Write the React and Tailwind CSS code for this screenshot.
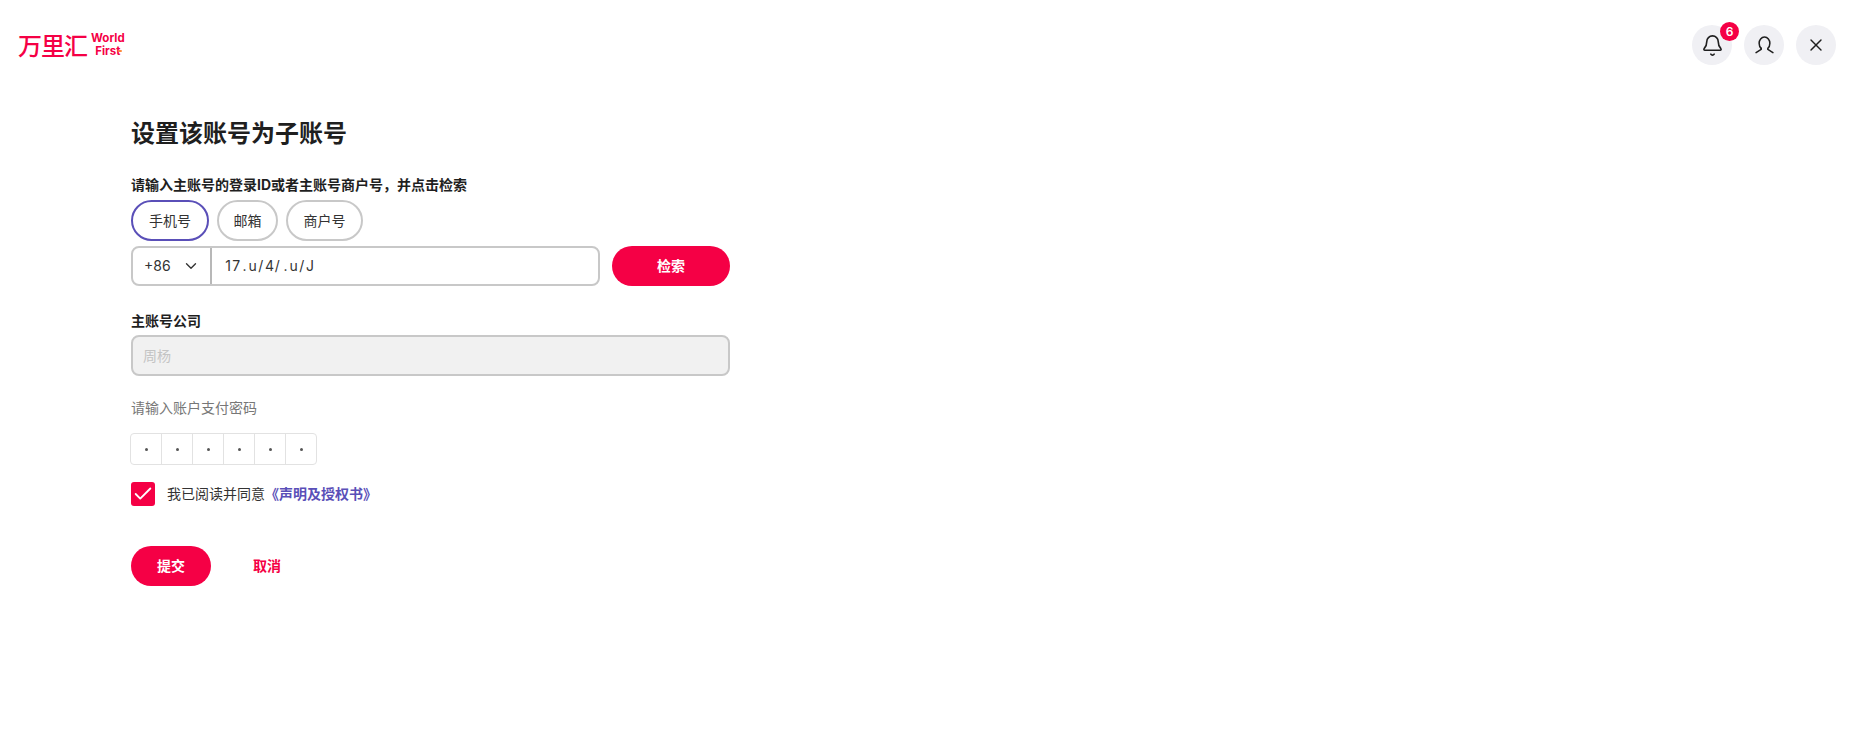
import { Bell, ChevronDown, Check, X } from 'lucide-react';

const CJK = "font-['Inter','Noto_Sans_CJK_SC',sans-serif]";

// the number is partly wiped out in the picture, only these bits are left
const PHONE_BITS = ['1', '7', '.', 'u', '/', '4', '/', '.', 'u', '/', 'J'];

function Logo() {
  return (
    <div className="flex items-center text-[#f50045]">
      <span className="text-[24px] leading-none font-medium tracking-[-1px] font-['Noto_Sans_CJK_SC',sans-serif]">万里汇</span>
      <div className="relative ml-[4px] flex flex-col items-center text-[11.5px] leading-[13px] font-bold font-['Inter',sans-serif]">
        <span>World</span>
        <span>First</span>
        <span className="absolute right-[3px] bottom-[6px] h-[2px] w-[4px] rounded-full bg-[#ff8a3c]" />
      </div>
    </div>
  );
}

function RoundButton({ children, badge }) {
  return (
    <div className="relative flex h-10 w-10 items-center justify-center rounded-full bg-[#f0f0f4] text-[#1f1f1f]">
      {children}
      {badge && (
        <span className="absolute -top-[3px] -right-[7px] flex h-[19px] w-[19px] items-center justify-center rounded-full bg-[#f50045] text-xs leading-none font-semibold text-white">
          {badge}
        </span>
      )}
    </div>
  );
}

function UserIcon() {
  return (
    <svg width="23" height="23" viewBox="0 0 18 18" fill="none" stroke="currentColor" strokeWidth="1.2" strokeLinecap="round">
      <path d="M6.4 11.2C5.2 10.2 4.8 8.8 4.8 7.2 4.8 4.6 6.5 2.4 9 2.4s4.2 2.2 4.2 4.8c0 1.6-.4 3-1.6 4v.8l4 2.6" />
      <path d="M6.4 11.2v.8l-4 2.6" />
    </svg>
  );
}

function Tab({ label, active, width }) {
  return (
    <div
      className={`flex h-[41px] items-center justify-center rounded-full bg-white text-sm text-[#333] ${width} ${
        active ? 'border-2 border-[#5a4fb8]' : 'border-2 border-[#c8c8c8]'
      }`}
    >
      {label}
    </div>
  );
}

export default function App() {
  return (
    <div className={`min-h-[729px] bg-white ${CJK}`}>
      <header className="flex h-[90px] items-center justify-between pr-[33px] pl-[18px]">
        <Logo />
        <div className="flex gap-3">
          <RoundButton badge="6"><Bell size={23} strokeWidth={1.7} /></RoundButton>
          <RoundButton><UserIcon /></RoundButton>
          <RoundButton><X size={20} strokeWidth={1.7} /></RoundButton>
        </div>
      </header>

      <main className="ml-[131px] w-[599px] pt-[27px]">
        <h1 className="text-2xl leading-[34px] font-bold text-[#1f1f1f]">设置该账号为子账号</h1>

        <p className="mt-6 text-sm leading-5 font-bold text-[#1f1f1f]">请输入主账号的登录ID或者主账号商户号，并点击检索</p>

        <div className="mt-[5px] flex gap-2">
          <Tab label="手机号" active width="w-[78px]" />
          <Tab label="邮箱" width="w-[61px]" />
          <Tab label="商户号" width="w-[77px]" />
        </div>

        <div className="mt-[5px] flex gap-3">
          <div className="flex h-10 w-[470px] rounded-lg border-2 border-[#c8c8c8] bg-white text-sm text-[#333]">
            <div className="flex w-[79px] items-center justify-between border-r-2 border-[#b8b8b8] pr-[10px] pl-[11px]">
              <span>+86</span>
              <ChevronDown size={18} strokeWidth={1.8} />
            </div>
            <div className="flex items-center pl-3">
              {PHONE_BITS.map((c, i) => (
                <span key={i} className="w-[8.2px] text-center">{c}</span>
              ))}
            </div>
          </div>
          <button className="h-10 w-[118px] rounded-full bg-[#f50045] text-sm font-bold text-white">检索</button>
        </div>

        <p className="mt-[25px] text-sm leading-5 font-bold text-[#1f1f1f]">主账号公司</p>
        <div className="mt-1 flex h-[41px] items-center rounded-lg border-2 border-[#c8c8c8] bg-[#f1f1f1] pl-[10px] text-sm text-[#c4c4c4]">周杨</div>

        <p className="mt-[22px] text-sm leading-5 text-[#777]">请输入账户支付密码</p>

        <div className="mt-[15px] -ml-px flex h-8 w-[187px] rounded border border-[#e2e2e2]">
          {[0, 1, 2, 3, 4, 5].map((i) => (
            <div key={i} className="flex flex-1 items-center justify-center border-r border-[#e2e2e2] last:border-r-0">
              <span className="h-[3px] w-[3px] rounded-full bg-[#555]" />
            </div>
          ))}
        </div>

        <label className="mt-[17px] flex items-center gap-3">
          <span className="flex h-6 w-6 items-center justify-center rounded-[3px] bg-[#f50045] text-white">
            <Check size={22} strokeWidth={2} />
          </span>
          <span className="text-sm leading-5 text-[#333]">
            我已阅读并同意
            <span className="font-bold text-[#5a4fb8]">《声明及授权书》</span>
          </span>
        </label>

        <div className="mt-10 flex items-center">
          <button className="h-10 w-20 rounded-full bg-[#f50045] text-sm font-bold text-white">提交</button>
          <button className="ml-[42px] text-sm font-bold text-[#f50045]">取消</button>
        </div>
      </main>
    </div>
  );
}
